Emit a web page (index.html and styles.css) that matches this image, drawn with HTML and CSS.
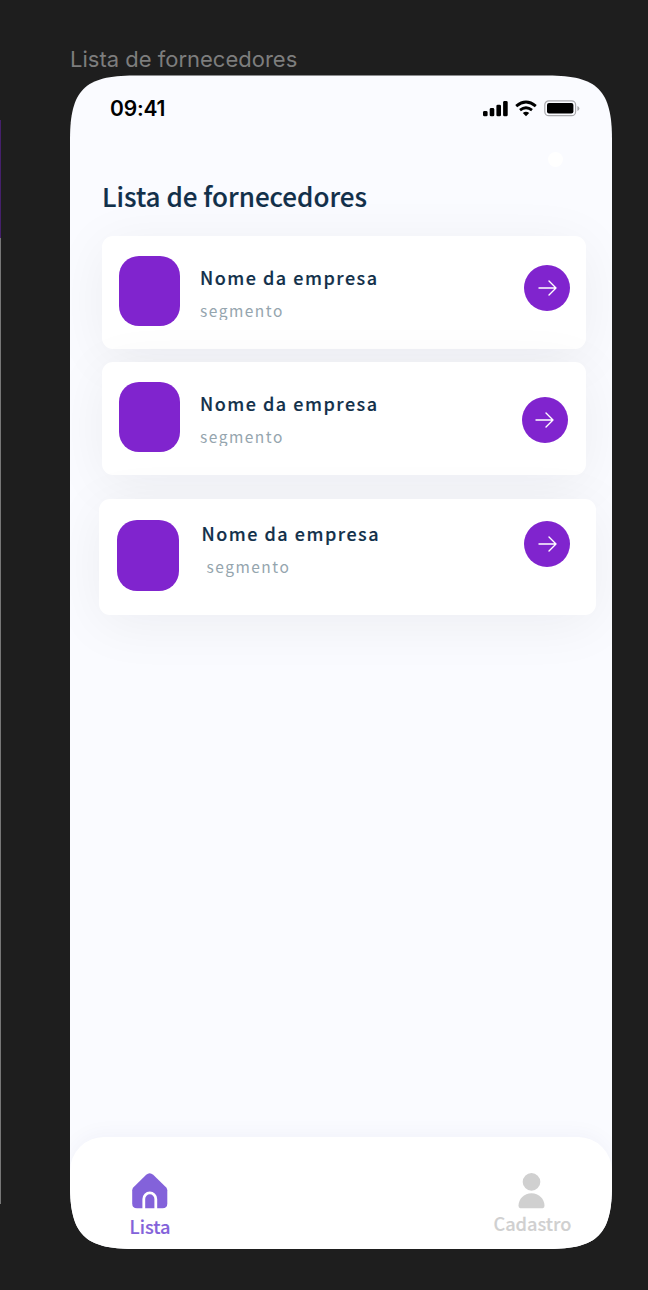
FILE: index.html
```html
<!DOCTYPE html>
<html lang="pt-BR">
<head>
<meta charset="utf-8">
<title>Lista de fornecedores</title>
<link rel="stylesheet" href="styles.css">
</head>
<body>
<div class="neighbor"><div class="neighbor-top"></div><div class="neighbor-body"></div></div>
<main class="board">
  <div class="frame-label"><span>Lista de fornecedores</span></div>
  <section class="phone">
    <header class="status">
      <span class="time">09:41</span>
      <svg class="status-icons" width="98" height="20" viewBox="0 0 98 20">
        <rect x="1" y="12" width="4.6" height="5.3" rx="1.4"/>
        <rect x="7.7" y="9" width="4.6" height="8.3" rx="1.4"/>
        <rect x="14.4" y="5.7" width="4.6" height="11.6" rx="1.4"/>
        <rect x="21.1" y="2" width="4.6" height="15.3" rx="1.4"/>
        <path d="M34.2 7.1Q44 -.9 53.8 7.1M38 11.1Q44 6.6 50 11.1" fill="none" stroke="#000" stroke-width="2.9"/>
        <path d="M44 17.2L40.8 14Q44 11.6 47.2 14Z"/>
        <rect x="62.8" y="1.8" width="30.8" height="14.9" rx="4" fill="none" stroke="#a9a9ad" stroke-width="1.2"/>
        <rect x="65" y="4" width="26.4" height="10.6" rx="2"/>
        <path d="M95.4 7v5q2-.6 2-2.5t-2-2.5z" fill="#a9a9ad"/>
      </svg>
    </header>
    <div class="dot"></div>
    <h1 class="title"><span>Lista de fornecedores</span></h1>
    <div class="list">
      <article class="card">
        <div class="thumb"></div>
        <div class="info"><h2 class="name">Nome da empresa</h2><p class="segment clipped">segmento</p></div>
        <div class="go"><svg width="20" height="16" viewBox="0 0 20 16"><path d="M1 8h17M11 1l7 7l-7 7"/></svg></div>
      </article>
      <article class="card second">
        <div class="thumb"></div>
        <div class="info"><h2 class="name">Nome da empresa</h2><p class="segment clipped">segmento</p></div>
        <div class="go"><svg width="20" height="16" viewBox="0 0 20 16"><path d="M1 8h17M11 1l7 7l-7 7"/></svg></div>
      </article>
      <article class="card third">
        <div class="thumb"></div>
        <div class="info"><h2 class="name">Nome da empresa</h2><p class="segment">segmento</p></div>
        <div class="go"><svg width="20" height="16" viewBox="0 0 20 16"><path d="M1 8h17M11 1l7 7l-7 7"/></svg></div>
      </article>
    </div>
    <nav class="tabs">
      <div class="tab active">
        <svg width="36" height="36" viewBox="0 0 36 36">
          <path d="M14.2 1.8Q17.7-1.4 21.2 1.8L34 14.3Q35.3 15.6 35.3 17.3V30.5Q35.3 35.3 30.5 35.3H5Q.2 35.3.2 30.5V17.3Q.2 15.6 1.5 14.3Z" fill="#8362da"/>
          <path d="M11.8 36V25.9a6 6 0 0 1 12 0V36" fill="none" stroke="#fff" stroke-width="2.8"/>
        </svg>
        <span>Lista</span>
      </div>
      <div class="tab register">
        <svg width="28" height="36" viewBox="0 0 28 36" fill="#d0d0d0">
          <circle cx="13.500" cy="8.9" r="8.8"/>
          <path d="M.5 32.8C.5 26 6.100 20.3 13.500 20.3S26.500 26 26.500 32.8Q26.500 35.2 24.700 35.2H2.300Q.5 35.2 .5 32.8Z"/>
        </svg>
        <span>Cadastro</span>
      </div>
    </nav>
  </section>
</main>
</body>
</html>
```
FILE: styles.css
```css
* { box-sizing: border-box; }
body {
  margin: 0;
  width: 648px;
  height: 1290px;
  display: flex;
  overflow: hidden;
  background: #1e1e1e;
  font-family: "Noto Sans CJK SC", "Noto Sans", sans-serif;
}
.neighbor { width: 1px; padding-top: 120px; }
.neighbor-top { height: 118px; background: #45206b; }
.neighbor-body { height: 966px; background: #777; }
.board { margin-left: 69px; width: 542px; }
.frame-label {
  height: 75px;
  padding-top: 44px;
  font: 400 22px/30px Inter, sans-serif;
  color: #7d7d7d;
  white-space: nowrap;
}
.phone {
  width: 542px;
  height: 1174px;
  display: flex;
  flex-direction: column;
  background: #fafbff;
  clip-path: path("M0 64.5C0 15.2 14.7.5 64 .5H478C527.3.5 542 15.2 542 64.5V1110C542 1159.3 527.3 1174 478 1174H64C14.7 1174 0 1159.3 0 1110Z");
}
.status {
  height: 77px;
  padding: 18px 32px 0 40px;
  display: flex;
  justify-content: space-between;
  align-items: flex-start;
}
.time {
  padding-top: 1px;
  font: 600 21px/30px Inter, sans-serif;
  letter-spacing: -.2px;
  color: #000;
}
.status-icons { margin-top: 6px; }
.dot {
  width: 15px;
  height: 15px;
  margin-left: 478px;
  border-radius: 50%;
  background: #fff;
}
.title {
  margin: 9px 0 0 32px;
  height: 60px;
  font-size: 26px;
  line-height: 40px;
  font-weight: 500;
  -webkit-text-stroke: .15px #12304a;
  color: #12304a;
  white-space: nowrap;
}
.list { flex: 1; }
.card {
  width: 484.500px;
  height: 113px;
  margin-left: 31.500px;
  padding: 20px 16px 0 17.500px;
  display: flex;
  background: #fff;
  border-radius: 11px;
  box-shadow: 0 9px 56px rgba(20, 20, 40, .06);
}
.thumb {
  width: 60.500px;
  height: 69.500px;
  border-radius: 20px;
  background: #8024ce;
}
.info { flex: 1; padding: 7px 0 0 20.500px; }
.name {
  margin: 0;
  font-size: 18px;
  line-height: 28px;
  font-weight: 500;
  letter-spacing: 1.5px;
  -webkit-text-stroke: .15px #12304a;
  color: #12304a;
}
.segment {
  margin: 6px 0 0;
  font-size: 15.500px;
  line-height: 26px;
  letter-spacing: 1.5px;
  color: #95a5ae;
}
.clipped { height: 23px; overflow: hidden; }
.go {
  width: 46px;
  height: 46px;
  margin-top: 9px;
  padding-left: 1px;
  display: flex;
  align-items: center;
  justify-content: center;
  border-radius: 50%;
  background: #8024ce;
}
.go path {
  fill: none;
  stroke: #fff;
  stroke-width: 1.4;
  stroke-linecap: round;
  stroke-linejoin: round;
}
.second { margin-top: 13px; }
.second .go { margin: 15px 1.800px 0 0; padding-left: 0; }
.third {
  width: 497px;
  height: 116px;
  margin: 24px 0 0 29px;
  padding: 21px 26px 0 18px;
}
.third .thumb { width: 62px; height: 71px; }
.third .info { padding: 0 0 0 22.500px; }
.third .name { margin-top: -1px; }
.third .segment { padding-left: 5px; }
.third .go { margin-top: 1px; }
.tabs {
  height: 112px;
  padding: 36px 40.500px 0 59.500px;
  display: flex;
  justify-content: space-between;
  background: #fff;
  border-radius: 34px 34px 0 0;
  box-shadow: 0 -4px 20px rgba(40, 40, 100, .035);
}
.tab {
  display: flex;
  flex-direction: column;
  align-items: center;
  font-size: 18.200px;
  line-height: 28px;
  font-weight: 500;
  -webkit-text-stroke: .15px currentColor;
  color: #8362da;
}
.active span { margin-top: 3px; }
.register { color: #d0d0d0; }
```
